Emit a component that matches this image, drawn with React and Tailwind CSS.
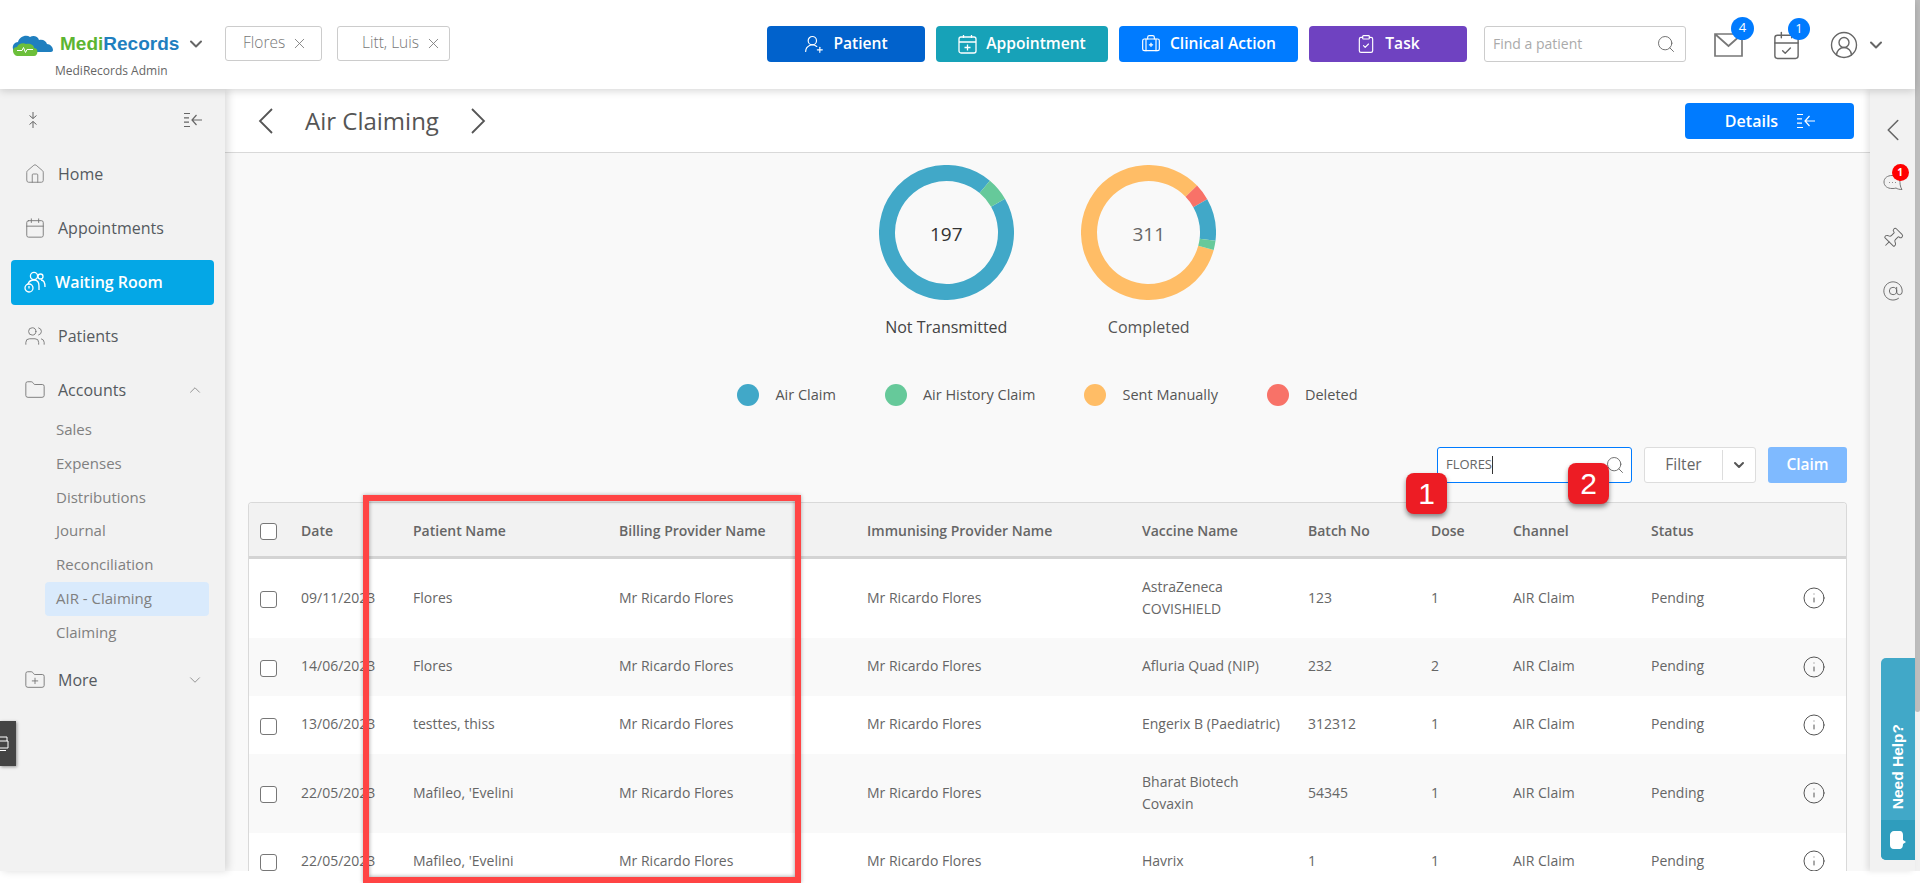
import {
  BriefcaseMedical,
  CalendarCheck,
  ChevronDown,
  ChevronLeft,
  ChevronUp,
  CircleUserRound,
  ClipboardCheck,
  Folder,
  FolderPlus,
  House,
  Calendar,
  Info,
  Pin,
  AtSign,
  Search,
  UserRoundPlus,
  Users,
  X,
} from 'lucide-react'

const columns = 'grid grid-cols-[52px_112px_206px_248px_275px_166px_123px_82px_138px_152px_1fr] items-center'

const rows = [
  { date: '09/11/2023', patient: 'Flores', vaccine: ['AstraZeneca', 'COVISHIELD'], batch: '123', dose: '1', height: 'h-[79px]', bg: 'bg-white' },
  { date: '14/06/2023', patient: 'Flores', vaccine: ['Afluria Quad (NIP)'], batch: '232', dose: '2', height: 'h-[58px]', bg: 'bg-[#f9f9f9]' },
  { date: '13/06/2023', patient: 'testtes, thiss', vaccine: ['Engerix B (Paediatric)'], batch: '312312', dose: '1', height: 'h-[58px]', bg: 'bg-white' },
  { date: '22/05/2023', patient: "Mafileo, 'Evelini", vaccine: ['Bharat Biotech', 'Covaxin'], batch: '54345', dose: '1', height: 'h-[79px]', bg: 'bg-[#f9f9f9]' },
  { date: '22/05/2023', patient: "Mafileo, 'Evelini", vaccine: ['Havrix'], batch: '1', dose: '1', height: 'h-[57px]', bg: 'bg-white' },
]

const legend = [
  { label: 'Air Claim', dot: 'bg-[#41a8c8]' },
  { label: 'Air History Claim', dot: 'bg-[#66c99a]' },
  { label: 'Sent Manually', dot: 'bg-[#ffbd66]' },
  { label: 'Deleted', dot: 'bg-[#f87268]' },
]

const subItems = ['Sales', 'Expenses', 'Distributions', 'Journal', 'Reconciliation', 'AIR - Claiming', 'Claiming']

function arc(a0, a1) {
  const r = 59.5
  const point = (a) => {
    const rad = ((a - 90) * Math.PI) / 180
    return `${67.5 + r * Math.cos(rad)} ${67.5 + r * Math.sin(rad)}`
  }
  return `M ${point(a0)} A ${r} ${r} 0 ${a1 - a0 > 180 ? 1 : 0} 1 ${point(a1)}`
}

function Donut({ value, label, segments, valueClass, labelClass }) {
  return (
    <div className="flex w-[135px] flex-col items-center">
      <div className="relative h-[135px] w-[135px]">
        <svg width="135" height="135" viewBox="0 0 135 135" fill="none">
          {segments.map((s, i) => (
            <path key={i} d={arc(s[0], s[1])} stroke={s[2]} strokeWidth="16" />
          ))}
        </svg>
        <div className={`absolute inset-0 flex items-center justify-center pt-[4px] text-[19px] ${valueClass}`}>{value}</div>
      </div>
      <div className={`mt-[16px] whitespace-nowrap text-[16px] leading-[22px] ${labelClass}`}>{label}</div>
    </div>
  )
}

function MenuLines({ color }) {
  return (
    <svg width="20" height="16" viewBox="0 0 20 16" fill="none" stroke={color} strokeWidth="1.2">
      <path d="M1 1.5h6M1 5.8h5M1 10.2h5M1 14.5h6M19 8H9M13.5 3 9 8l4.500 5" />
    </svg>
  )
}

function Logo() {
  return (
    <svg width="41" height="24" viewBox="0 0 41 24">
      <path d="M1 17c-1-4 2-7 5-7 1-5 8-8 12-5 3-2 8-1 9 3 4-1 7 1 8 4 3 0 6 3 6 6 0 1-1 2-2 2H4c-2 0-3-1-3-3z" fill="#1f7fbf" />
      <path d="M2 22c-2-3-1-7 3-7 1-3 6-5 9-3 4-1 8 1 8 4 3 0 4 3 3 6-1 1-1 2-3 2H5c-1 0-2-1-3-2z" fill="#6cbf3a" />
      <path d="M5 18.500h5l1.500-3 2 5 1.500-3h6" fill="none" stroke="#fff" strokeWidth="1" />
    </svg>
  )
}

function TopButton({ width, bg, icon, children }) {
  return (
    <button className={`flex h-[36px] items-center justify-center gap-[9px] rounded-[4px] text-[15.6px] font-semibold text-white ${width} ${bg}`}>
      {icon}
      {children}
    </button>
  )
}

function Checkbox() {
  return <span className="block h-[17px] w-[17px] rounded-[3px] border border-[#777] bg-white" />
}

function Header() {
  return (
    <header className="relative z-20 flex h-[89px] shrink-0 items-center bg-white shadow-[0_2px_8px_rgba(0,0,0,0.16)]">
      <div className="w-[225px] shrink-0 pl-[12px] pt-[22px]">
        <div className="flex items-center">
          <Logo />
          <span className="ml-[7px] font-['Liberation_Sans',sans-serif] text-[19px] font-bold leading-[24px]">
            <span className="text-[#5cb531]">Medi</span>
            <span className="text-[#1f7fbf]">Records</span>
          </span>
          <ChevronDown size={20} strokeWidth={2.4} className="ml-[7px] text-[#666]" />
        </div>
        <div className="ml-[43px] mt-[6px] text-[12px] leading-[18px] text-[#666]">MediRecords Admin</div>
      </div>
      <div className="-mt-[3px] flex gap-[15px]">
        <div className="flex h-[35px] w-[97px] items-center gap-[6px] rounded-[3px] border border-[#ccc] pl-[17px] text-[15.5px] font-light text-[#777]">
          Flores <X size={17} strokeWidth={1.2} />
        </div>
        <div className="flex h-[35px] w-[113px] items-center gap-[6px] rounded-[3px] border border-[#ccc] pl-[24px] text-[15.5px] font-light text-[#777]">
          Litt, Luis <X size={17} strokeWidth={1.2} />
        </div>
      </div>
      <div className="-mt-[2px] ml-[317px] flex gap-[11px]">
        <TopButton width="w-[158px]" bg="bg-[#0162cc]" icon={<UserRoundPlus size={20} strokeWidth={1.4} />}>Patient</TopButton>
        <TopButton width="w-[172px]" bg="bg-[#17a2b8]" icon={<CalendarPlusIcon />}>Appointment</TopButton>
        <TopButton width="w-[179px]" bg="bg-[#007bff]" icon={<BriefcaseMedical size={20} strokeWidth={1.4} />}>Clinical Action</TopButton>
        <TopButton width="w-[158px]" bg="bg-[#6f42c1]" icon={<ClipboardCheck size={20} strokeWidth={1.4} />}>Task</TopButton>
      </div>
      <div className="-mt-[2px] ml-[17px] flex h-[36px] w-[202px] items-center justify-between rounded-[3px] border border-[#ccc] pl-[8px] pr-[9px] text-[14px] text-[#aaa]">
        Find a patient
        <Search size={20} strokeWidth={1.1} className="text-[#666]" />
      </div>
      <div className="relative ml-[28px] h-[24px] w-[29px]">
        <svg width="29" height="24" viewBox="0 0 29 24" fill="none" stroke="#777" strokeWidth="1.7">
          <path d="M1 1h27v22H1zM1 1l13.500 12L28 1" />
        </svg>
        <span className="absolute -right-[11px] -top-[16px] flex h-[23px] w-[23px] items-center justify-center rounded-full bg-[#007bff] text-[13px] text-white">4</span>
      </div>
      <div className="relative ml-[28px] h-[30px] w-[31px]">
        <CalendarCheck size={31} strokeWidth={1.1} className="text-[#666]" />
        <span className="absolute -right-[8px] -top-[12px] flex h-[22px] w-[22px] items-center justify-center rounded-full bg-[#007bff] text-[13px] text-white">1</span>
      </div>
      <CircleUserRound size={30} strokeWidth={1.1} className="ml-[27px] text-[#666]" />
      <ChevronDown size={20} strokeWidth={2.4} className="ml-[7px] text-[#666]" />
    </header>
  )
}

function CalendarPlusIcon() {
  return (
    <svg width="19" height="20" viewBox="0 0 19 20" fill="none" stroke="currentColor" strokeWidth="1.3">
      <rect x="1" y="3" width="17" height="16" rx="2" />
      <path d="M1 8h17M5.500 1v3M13.500 1v3M9.500 10.500v6M6.500 13.500h6" />
    </svg>
  )
}

function WaitingIcon() {
  return (
    <svg width="22" height="22" viewBox="0 0 22 22" fill="none" stroke="#fff" strokeWidth="1.3">
      <circle cx="10" cy="5" r="3.600" />
      <circle cx="16.500" cy="5.500" r="2.500" />
      <path d="M4 13c1-3 3-4 6-4s5 2 5 6v4M17 9c3 0 4 3 4 7" />
      <circle cx="5" cy="17" r="4" />
      <path d="M5 15v2.500" />
    </svg>
  )
}

function Sidebar() {
  return (
    <aside className="relative z-10 w-[225px] shrink-0 bg-[#f2f2f2] shadow-[3px_0_8px_rgba(0,0,0,0.14)]">
      <div className="mb-[7px] mt-[11px] flex h-[40px] items-center justify-between pl-[27px] pr-[22px] text-[#666]">
        <svg width="12" height="16" viewBox="0 0 12 16" fill="none" stroke="#666" strokeWidth="1">
          <path d="M6 0v6.500M2.500 3.500 6 6.500l3.500-3M6 16V9.500M2.500 12.500 6 9.500l3.500 3" />
        </svg>
        <MenuLines color="#666" />
      </div>
      <NavItem icon={<House size={22} strokeWidth={0.9} />}>Home</NavItem>
      <NavItem icon={<Calendar size={22} strokeWidth={1} />}>Appointments</NavItem>
      <div className="flex h-[54px] items-center px-[11px]">
        <div className="flex h-[45px] w-[203px] items-center gap-[9px] rounded-[4px] bg-[#04a7e6] pl-[13px] text-[16px] font-semibold text-white">
          <WaitingIcon />
          Waiting Room
        </div>
      </div>
      <NavItem icon={<Users size={22} strokeWidth={1} />}>Patients</NavItem>
      <NavItem icon={<Folder size={22} strokeWidth={1} />} caret={<ChevronUp size={18} strokeWidth={1} />}>Accounts</NavItem>
      <div className="-mt-[4px] mb-[4px]">
        {subItems.map((item) => (
          <div
            key={item}
            className={`ml-[45px] flex h-[33.75px] w-[164px] items-center rounded-[4px] pb-[1px] pl-[11px] text-[15px] text-[#808080] ${item === 'AIR - Claiming' ? 'bg-[#d9eafc]' : ''}`}
          >
            {item}
          </div>
        ))}
      </div>
      <NavItem icon={<FolderPlus size={22} strokeWidth={1} />} caret={<ChevronDown size={18} strokeWidth={1} />}>More</NavItem>
    </aside>
  )
}

function NavItem({ icon, caret, children }) {
  return (
    <div className="flex h-[54px] items-center pl-[24px] pr-[21px] text-[16px] text-[#555a60]">
      <span className="mr-[12px] text-[#777]">{icon}</span>
      {children}
      {caret ? <span className="ml-auto text-[#777]">{caret}</span> : null}
    </div>
  )
}

function TableHeader() {
  return (
    <div className={`${columns} h-[56px] border-b-[3px] border-[#d4d4d4] bg-[#f2f2f2] pt-[1px] text-[14px] font-semibold text-[#666]`}>
      <span className="pl-[11px] pt-[3px]"><Checkbox /></span>
      <span>Date</span>
      <span>Patient Name</span>
      <span>Billing Provider Name</span>
      <span>Immunising Provider Name</span>
      <span>Vaccine Name</span>
      <span>Batch No</span>
      <span>Dose</span>
      <span>Channel</span>
      <span>Status</span>
      <span />
    </div>
  )
}

function TableRow({ row }) {
  return (
    <div className={`${columns} ${row.height} ${row.bg} pb-[2px] text-[14px] leading-[22px] text-[#666]`}>
      <span className="pl-[11px] pt-[4px]"><Checkbox /></span>
      <span>{row.date}</span>
      <span>{row.patient}</span>
      <span>Mr Ricardo Flores</span>
      <span>Mr Ricardo Flores</span>
      <span>
        {row.vaccine.map((line) => (
          <span key={line} className="block">{line}</span>
        ))}
      </span>
      <span>{row.batch}</span>
      <span>{row.dose}</span>
      <span>AIR Claim</span>
      <span>Pending</span>
      <Info size={24} strokeWidth={1} className="-ml-[1px] mt-[1px] text-[#555]" />
    </div>
  )
}

function Main() {
  return (
    <main className="flex min-w-0 flex-1 flex-col overflow-hidden bg-[#f9f9f9]">
      <div className="flex h-[64px] shrink-0 items-center border-b border-[#d9d9d9] bg-white pl-[33px] pr-[16px]">
        <svg width="16" height="28" viewBox="0 0 16 28" fill="none" stroke="#555" strokeWidth="1.8"><path d="M14 2 2 14l12 12" /></svg>
        <h1 className="ml-[31px] text-[24px] leading-[32px] text-[#555]">Air Claiming</h1>
        <svg width="16" height="28" viewBox="0 0 16 28" fill="none" stroke="#555" strokeWidth="1.8" className="ml-[31px]"><path d="m2 2 12 12L2 26" /></svg>
        <button className="ml-auto flex h-[36px] w-[169px] items-center justify-center gap-[18px] rounded-[4px] bg-[#007bff] pl-[2px] text-[16px] font-semibold text-white">
          Details
          <MenuLines color="#fff" />
        </button>
      </div>

      <div className="mt-[12px] flex shrink-0 justify-center gap-[67.5px]">
        <Donut
          value="197"
          label="Not Transmitted"
          valueClass="text-[#333]"
          labelClass="font-medium text-[#444]"
          segments={[[60, 400, '#41a8c8'], [40, 60, '#66c99a']]}
        />
        <Donut
          value="311"
          label="Completed"
          valueClass="text-[#666]"
          labelClass="text-[#555]"
          segments={[[105, 406, '#ffbd66'], [46, 60.5, '#f87268'], [60.5, 97, '#41a8c8'], [97, 105, '#66c99a']]}
        />
      </div>

      <div className="mt-[46px] flex shrink-0 justify-center gap-[49px]">
        {legend.map((item) => (
          <div key={item.label} className="flex h-[22px] items-center gap-[16px] text-[14.5px] text-[#555]">
            <span className={`h-[22px] w-[22px] rounded-full ${item.dot}`} />
            {item.label}
          </div>
        ))}
      </div>

      <div className="mr-[23px] mt-[41px] flex shrink-0 justify-end gap-[12px]">
        <div className="flex h-[36px] w-[195px] items-center rounded-[3px] border border-[#007bff] bg-white pl-[8px] pr-[6px] text-[13px] text-[#666]">
          FLORES
          <span className="h-[18px] w-px bg-[#333]" />
          <Search size={20} strokeWidth={1.1} className="ml-auto text-[#666]" />
        </div>
        <div className="flex h-[36px] w-[112px] items-center rounded-[3px] border border-[#ddd] bg-white text-[15.5px] text-[#666]">
          <span className="w-[77px] text-center">Filter</span>
          <span className="flex h-[30px] flex-1 items-center justify-center border-l border-[#ddd]">
            <ChevronDown size={16} strokeWidth={3} className="text-[#555]" />
          </span>
        </div>
        <button className="h-[36px] w-[79px] rounded-[3px] bg-[#7fbaff] text-[15.5px] font-semibold text-white">Claim</button>
      </div>

      <div className="mx-[23px] mt-[19px] flex-1 overflow-hidden rounded-t-[4px] border border-b-0 border-[#d9d9d9] bg-white">
        <TableHeader />
        {rows.map((row, i) => (
          <TableRow key={i} row={row} />
        ))}
      </div>
    </main>
  )
}

function RightRail() {
  return (
    <div className="relative z-10 flex w-[45px] shrink-0 flex-col items-center bg-[#f2f2f2] pt-[22px] text-[#666] shadow-[-3px_0_6px_rgba(0,0,0,0.1)]">
      <ChevronLeft size={38} strokeWidth={1} />
      <div className="relative mt-[25px] h-[20px] w-[20px]">
        <svg width="20" height="20" viewBox="0 0 20 20" fill="none" stroke="#777" strokeWidth="1">
          <path d="M9 1.500c4.500 0 8 3 8 7 0 2 .5 5 2 7-2.500 0-4.500-.5-6-1.500-1 .5-2.500.5-4 .5-4.500 0-8-2.500-8-6.500s3.500-6.500 8-6.500z" />
          <path d="M6 8.500h.8M9 8.500h.8M12 8.500h.8" />
        </svg>
        <span className="absolute -right-[6px] -top-[10px] flex h-[17px] w-[17px] items-center justify-center rounded-full bg-[#f00] text-[10px] font-bold text-white">1</span>
      </div>
      <Pin size={23} strokeWidth={1} className="mt-[33px] rotate-45" />
      <AtSign size={22} strokeWidth={1} className="mt-[30px]" />
      <div className="absolute bottom-[11px] right-0 flex h-[202px] w-[34px] flex-col overflow-hidden rounded-l-[5px] bg-[#41a8c8]">
        <div className="flex flex-1 items-end justify-center pb-[11px]">
          <span className="rotate-180 font-['Liberation_Sans',sans-serif] text-[15.5px] font-bold text-white [writing-mode:vertical-rl]">Need Help?</span>
        </div>
        <div className="flex h-[40px] items-center justify-center bg-[#2f9dbd]">
          <svg width="18" height="20" viewBox="0 0 18 20" fill="#fff"><path d="M5 1h6c2 0 3 2 3 4v5l3 2-3 2c0 3-1 5-4 5H5c-3 0-4-2-4-4V5c0-2 2-4 4-4z" /></svg>
        </div>
      </div>
    </div>
  )
}

export default function App() {
  return (
    <div className="relative h-[883px] w-[1920px] overflow-hidden bg-white font-['Open_Sans',sans-serif]">
      <div className="flex h-[871px]">
        <div className="flex w-[1915px] flex-col">
          <Header />
          <div className="flex min-h-0 flex-1">
            <Sidebar />
            <Main />
            <RightRail />
          </div>
        </div>
        <div className="flex-1 bg-[#f1f1f1]">
          <div className="h-[712px] rounded-b-[3px] bg-[#bdbdbd]" />
        </div>
      </div>

      <div className="absolute left-0 top-[721px] z-20 flex h-[45px] w-[16px] items-center justify-end overflow-hidden bg-[#444] pr-[7px] shadow-[1px_1px_3px_rgba(0,0,0,0.4)]">
        <svg width="12" height="16" viewBox="0 0 12 16" fill="none" stroke="#fff" strokeWidth="1" className="shrink-0">
          <path d="M2 1h8v4M0 5h11v7H0zM3 14.500h6" />
        </svg>
      </div>

      {/* annotations drawn on top of the screenshot */}
      <div className="absolute left-[363px] top-[495px] z-30 h-[388px] w-[438px] border-[6px] border-[#ff4444] shadow-[0_0_4px_rgba(0,0,0,0.3),inset_0_0_4px_rgba(0,0,0,0.4)]" />
      <div className="absolute left-[1406px] top-[473px] z-30 flex h-[41px] w-[41px] items-center justify-center rounded-[8px] bg-[#ed1c24] font-['Liberation_Sans',sans-serif] text-[30px] text-white shadow-[0_3px_5px_rgba(0,0,0,0.45)]">1</div>
      <div className="absolute left-[1568px] top-[463px] z-30 flex h-[41px] w-[41px] items-center justify-center rounded-[8px] bg-[#ed1c24] font-['Liberation_Sans',sans-serif] text-[30px] text-white shadow-[0_3px_5px_rgba(0,0,0,0.45)]">2</div>
    </div>
  )
}
